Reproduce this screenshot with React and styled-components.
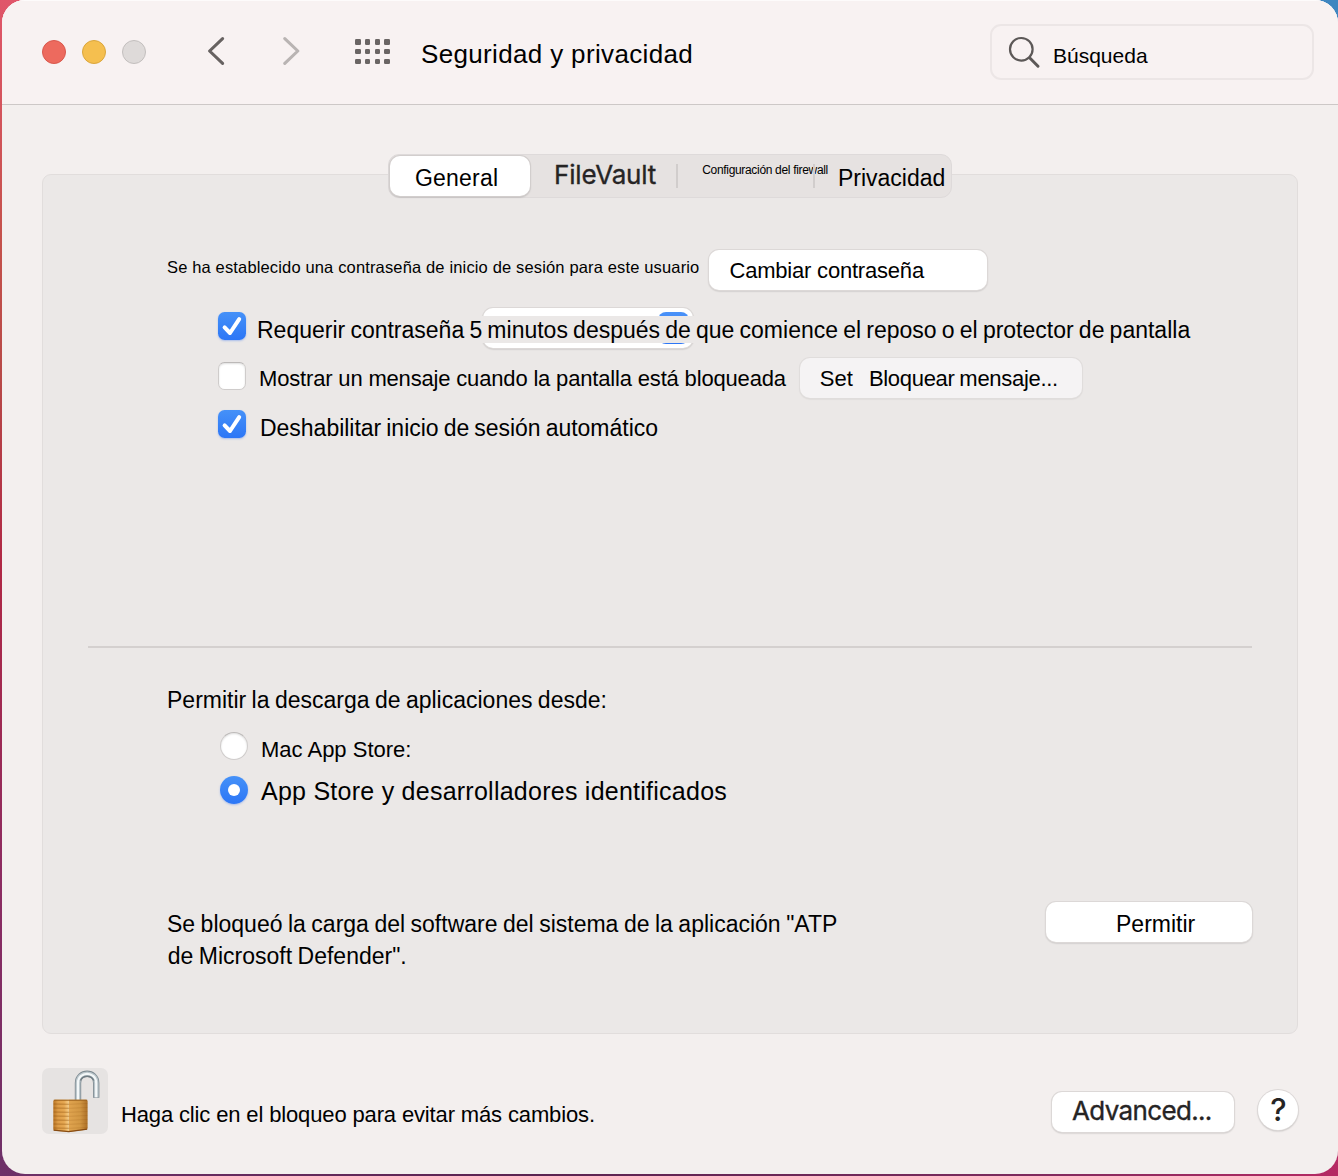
import React from "react";
import styled, { createGlobalStyle, css } from "styled-components";

const Global = createGlobalStyle`
  *, *::before, *::after { box-sizing: border-box; }
  body {
    margin: 0;
    overflow: hidden;
    font-family: "Liberation Sans", Arial, sans-serif;
    color: #000;
  }
`;

const Desktop = styled.div`
  width: 1338px;
  height: 1176px;
  padding: 0 0 2px 2px;
  background:
    radial-gradient(circle at 100% 0, #3f86c0 0 30px, transparent 31px),
    linear-gradient(90deg, #6e3068 0%, #5a2350 40%, #7a2a5c 75%, #b52a63 100%) 0 100% / 100% 24px no-repeat,
    linear-gradient(180deg, #e0566a 0%, #c5524c 20%, #b84a48 32%, #b02845 48%, #8c2c62 75%, #6e3068 100%);
`;

const Window = styled.main`
  display: flex;
  flex-direction: column;
  height: 1174px;
  border-radius: 23px;
  overflow: hidden;
  background: #f3efee;
  box-shadow: inset 0 1px 0 #fdfbfb;
`;

const Text = styled.span`
  flex: none;
  white-space: nowrap;
  line-height: ${(p) => p.$line || 26}px;
  font-size: ${(p) => p.$size || 22}px;
  letter-spacing: ${(p) => p.$track || 0}px;
  word-spacing: ${(p) => p.$word || 0}px;
  margin: ${(p) => p.$top || 0}px 0 0 ${(p) => p.$left || 0}px;
  ${(p) =>
    p.$ui &&
    css`
      font-family: Inter, Roboto, sans-serif;
      color: #262424;
      -webkit-text-stroke: 0.35px #262424;
    `}
`;

const Toolbar = styled.header`
  display: flex;
  align-items: flex-start;
  flex: none;
  height: 105px;
  padding: 0 24px 0 40px;
  background: #f8f2f2;
  border-bottom: 1px solid #cdc8c7;
  box-shadow: inset 0 1px 0 #fdfbfb;
`;

const Lights = styled.div`
  display: flex;
  gap: 16px;
  margin-top: 40px;
`;

const Light = styled.span`
  width: 24px;
  height: 24px;
  border-radius: 50%;
  background: ${(p) => p.$fill};
  border: 1px solid ${(p) => p.$edge};
`;

const Chevron = styled.svg`
  flex: none;
  width: 18px;
  height: 30px;
  margin: 36px 0 0 ${(p) => p.$left}px;
  fill: none;
  stroke: ${(p) => p.$color};
  stroke-width: 3.1;
  stroke-linecap: round;
  stroke-linejoin: round;
`;

const DotGrid = styled.div`
  display: grid;
  grid-template-columns: repeat(4, 5.6px);
  grid-auto-rows: 5.6px;
  gap: 4.2px;
  margin: 39px 0 0 54px;
`;

const Dot = styled.i`
  border-radius: 1.3px;
  background: #6a6564;
`;

const Search = styled.div`
  display: flex;
  align-items: flex-start;
  width: 324px;
  height: 56px;
  margin: 24px 0 0 auto;
  border: 2px solid #ece6e6;
  border-radius: 11px;
`;

const Magnifier = styled.svg`
  width: 34px;
  height: 34px;
  margin: 10px 0 0 15px;
  fill: none;
  stroke: #5c5857;
  stroke-linecap: round;
`;

const Body = styled.section`
  display: flex;
  flex-direction: column;
  flex: 1;
  padding: 49px 40px 0;
`;

const Tabs = styled.nav`
  z-index: 1;
  display: flex;
  align-items: flex-start;
  align-self: center;
  width: 564px;
  height: 44px;
  margin: 0 0 -24px 0;
  border: 1px solid #dedada;
  border-radius: 11px;
  background: #e6e2e1;
`;

const ActiveTab = styled.div`
  flex: none;
  width: 140px;
  height: 40px;
  margin: 1px 0 0 1px;
  border-radius: 10px;
  background: #fff;
  box-shadow: 0 0 0 1px #d2cecd, 0 1px 2px rgba(0, 0, 0, 0.35);
`;

const TabRule = styled.i`
  flex: none;
  width: 2px;
  height: 24px;
  margin: 9px 0 0 ${(p) => p.$left}px;
  background: #d1cdcc;
`;

const Panel = styled.section`
  display: flex;
  flex-direction: column;
  flex: none;
  height: 860px;
  padding: 74px 44px 0 45px;
  border: 1px solid #e1dddc;
  border-radius: 9px;
  background: #ebe8e7;
`;

const Row = styled.div`
  position: relative;
  display: flex;
  align-items: flex-start;
  flex: none;
  height: ${(p) => p.$height}px;
  padding-left: ${(p) => p.$indent || 0}px;
`;

const Button = styled.button`
  display: flex;
  align-items: flex-start;
  flex: none;
  width: ${(p) => p.$width}px;
  height: 40px;
  margin: ${(p) => (p.$top === undefined ? 1 : p.$top)}px 0 0 ${(p) => p.$left || 0}px;
  padding: 0;
  border: 0;
  border-radius: 10px;
  font: inherit;
  color: inherit;
  text-align: left;
  background: ${(p) => (p.$muted ? "#f5f3f4" : "#fff")};
  box-shadow: 0 0 0 1px ${(p) => (p.$muted ? "#e0dddc" : "#dcd8d7")},
    0 1px 2px rgba(0, 0, 0, ${(p) => (p.$muted ? 0.14 : 0.32)});
`;

const Box = styled.span`
  display: flex;
  flex: none;
  width: 28px;
  height: 28px;
  margin-top: 5px;
  border-radius: ${(p) => (p.$round ? "50%" : "6.5px")};
  align-items: center;
  justify-content: center;
  ${(p) =>
    p.$on
      ? css`
          background: linear-gradient(#4591f8, #2c76f6);
          box-shadow: 0 1px 2px rgba(50, 110, 240, 0.35);
        `
      : css`
          background: #fff;
          border: 1px solid #cfcccb;
          border-top-color: #bcb9b8;
          box-shadow: inset 0 1px 2px rgba(0, 0, 0, 0.13);
        `}
`;

const Tick = styled.svg`
  width: 28px;
  height: 28px;
  fill: none;
  stroke: #fff;
  stroke-width: 4;
  stroke-linecap: round;
  stroke-linejoin: round;
`;

const RadioDot = styled.i`
  width: 12px;
  height: 12px;
  border-radius: 50%;
  background: #fff;
`;

const Popup = styled.span`
  position: absolute;
  left: 394.5px;
  top: 1px;
  width: 210px;
  height: 40px;
  border-radius: 10px;
  background: #fff;
  box-shadow: 0 0 0 1px #dcd8d7, 0 1px 2px rgba(0, 0, 0, 0.32);

  &::before {
    content: "";
    position: absolute;
    right: 4px;
    top: 4px;
    width: 31px;
    height: 32px;
    border-radius: 8px;
    background: linear-gradient(#4a92f8, #2c76f6);
  }

  &::after {
    content: "";
    position: absolute;
    inset: 8px -3px 5px -3px;
    background: #ebe8e7;
  }
`;

const Over = styled(Text)`
  position: relative;
`;

const Divider = styled.hr`
  flex: none;
  width: 1164px;
  height: 2px;
  margin: 199px 0 38px;
  border: 0;
  background: #d4d0cf;
`;

const Notice = styled.div`
  display: flex;
  flex-direction: column;
  width: 878px;
  gap: 6px;
  padding-left: 79px;
`;

const Footer = styled.footer`
  display: flex;
  align-items: flex-start;
  margin-top: 34px;
`;

const LockWell = styled.div`
  width: 66px;
  height: 66px;
  border-radius: 7px;
  background: #e6e3e2;
`;

const Actions = styled.div`
  display: flex;
  align-items: flex-start;
  gap: 24px;
  margin: 22px 0 0 auto;
`;

const Help = styled.button`
  width: 40px;
  height: 40px;
  padding: 0 0 0 1px;
  border: 0;
  border-radius: 50%;
  background: #fff;
  color: #262424;
  font: 500 31px/40px Inter, Roboto, sans-serif;
  text-align: center;
  box-shadow: 0 0 0 1px #dcd8d7, 0 1px 2px rgba(0, 0, 0, 0.32);
`;

function Check({ on }) {
  return (
    <Box $on={on}>
      {on && (
        <Tick viewBox="0 0 28 28">
          <path d="M6.6 15.4 L12 21 L21.2 7.2" />
        </Tick>
      )}
    </Box>
  );
}

function Padlock() {
  const grooves = [36, 40, 44, 48, 52, 56, 60];
  const shackle = "M36 33 V15 C36 2.7 54.2 2.7 54.2 15";
  return (
    <svg width="66" height="66" viewBox="0 0 66 66" fill="none">
      <defs>
        <linearGradient id="left" x1="0" x2="1">
          <stop offset="0" stopColor="#b87424" />
          <stop offset="0.3" stopColor="#dd9c47" />
          <stop offset="0.7" stopColor="#e6a852" />
          <stop offset="1" stopColor="#f6cd86" />
        </linearGradient>
        <linearGradient id="right" x1="0" x2="1">
          <stop offset="0" stopColor="#e0a44f" />
          <stop offset="0.6" stopColor="#d29743" />
          <stop offset="1" stopColor="#ab6e26" />
        </linearGradient>
      </defs>
      <path d={`${shackle} V29.8`} stroke="#7c8990" strokeWidth="6.4" />
      <path d={`${shackle} V29.2`} stroke="#b9c4c9" strokeWidth="4.8" />
      <path d={`${shackle} V29.2`} stroke="#f3f7f8" strokeWidth="2.2" />
      <path d="M38.4 12.5 C40.6 6.8 49.6 6.8 51.8 12.5" stroke="#6f7c83" strokeWidth="1.3" />
      <path d="M11.3 33.5 Q11.3 31.8 13 31.8 H26.8 V64 L13 62.8 Q11.3 62.4 11.3 61 Z" fill="url(#left)" />
      <path d="M26.8 31.8 H44 Q45.6 31.8 45.6 33.5 V60 Q45.6 61.4 44 61.7 L26.8 64 Z" fill="url(#right)" />
      {grooves.map((g) => (
        <g key={g} stroke="#8f520e">
          <path d={`M11.6 ${g} L26.8 ${g + 0.3}`} strokeOpacity="0.5" strokeWidth="1.1" />
          <path d={`M26.8 ${g + 0.3} L45.4 ${g - 0.5}`} strokeOpacity="0.22" strokeWidth="0.9" />
        </g>
      ))}
      <path d="M11.8 32.2 H45.2" stroke="#9a601c" strokeWidth="1" />
      <path d="M11.6 62.2 L26.8 63.7 L45.2 61.2" stroke="#874c14" strokeWidth="1.2" />
    </svg>
  );
}

export default function App() {
  return (
    <Desktop>
      <Global />
      <Window>
        <Toolbar>
          <Lights>
            <Light $fill="#ed6a5e" $edge="#d9584d" />
            <Light $fill="#f5bf4f" $edge="#dba63c" />
            <Light $fill="#dedad9" $edge="#c3bfbe" />
          </Lights>
          <Chevron $left={61} $color="#676261" viewBox="0 0 18 30">
            <path d="M15.6 2.6 L2.6 15 L15.6 27.4" />
          </Chevron>
          <Chevron $left={58} $color="#b9b4b3" viewBox="0 0 18 30">
            <path d="M1.8 2.6 L14.8 15 L1.8 27.4" />
          </Chevron>
          <DotGrid>
            {Array.from({ length: 12 }, (_, i) => (
              <Dot key={i} />
            ))}
          </DotGrid>
          <Text $size={26} $line={30} $track={0.35} $top={39} $left={31}>
            Seguridad y privacidad
          </Text>
          <Search>
            <Magnifier viewBox="0 0 34 34">
              <circle cx="14.3" cy="13.3" r="11.3" strokeWidth="2.2" />
              <path d="M22.6 21.8 L31 30.2" strokeWidth="3" />
            </Magnifier>
            <Text $size={21} $top={17} $left={12}>
              Búsqueda
            </Text>
          </Search>
        </Toolbar>

        <Body>
          <Tabs>
            <ActiveTab>
              <Text as="div" $size={23} $track={0.2} $top={9} $left={25}>
                General
              </Text>
            </ActiveTab>
            <Text $ui $size={26} $track={-0.15} $top={7} $left={24}>
              FileVault
            </Text>
            <TabRule $left={20} />
            <Text $size={12} $line={16} $track={-0.32} $top={7} $left={24}>
              Configuración del firewall
            </Text>
            <TabRule $left={-15} />
            <Text $size={23} $top={10} $left={23}>
              Privacidad
            </Text>
          </Tabs>

          <Panel>
            <Row $height={58} $indent={79}>
              <Text $size={16.5} $track={0.15} $top={5}>
                Se ha establecido una contraseña de inicio de sesión para este usuario
              </Text>
              <Button $width={278} $left={10}>
                <Text $track={-0.2} $top={8} $left={20}>
                  Cambiar contraseña
                </Text>
              </Button>
            </Row>

            <Row $height={50} $indent={130}>
              <Popup />
              <Check on />
              <Over $size={23} $word={-1.2} $top={10} $left={11}>
                Requerir contraseña 5 minutos después de que comience el reposo o el protector de pantalla
              </Over>
            </Row>
            <Row $height={48} $indent={130}>
              <Check />
              <Text $track={-0.17} $top={9} $left={13}>
                Mostrar un mensaje cuando la pantalla está bloqueada
              </Text>
              <Button $muted $width={282} $left={14}>
                <Text $top={8} $left={20}>Set</Text>
                <Text $track={-0.3} $word={-1} $top={8} $left={16}>
                  Bloquear mensaje...
                </Text>
              </Button>
            </Row>
            <Row $height={42} $indent={130}>
              <Check on />
              <Text $size={23} $track={-0.02} $word={-1.3} $top={10} $left={14}>
                Deshabilitar inicio de sesión automático
              </Text>
            </Row>

            <Divider />

            <Row $height={41} $indent={79}>
              <Text $size={23} $word={-1} $top={1}>
                Permitir la descarga de aplicaciones desde:
              </Text>
            </Row>
            <Row $height={44} $indent={132}>
              <Box $round />
              <Text $top={10} $left={13}>Mac App Store:</Text>
            </Row>
            <Row $height={131} $indent={132}>
              <Box $round $on>
                <RadioDot />
              </Box>
              <Text $size={25} $track={0.25} $top={7} $left={13}>
                App Store y desarrolladores identificados
              </Text>
            </Row>

            <Row $height={70}>
              <Notice>
                <Text $size={23} $word={-0.9} $top={9}>
                  Se bloqueó la carga del software del sistema de la aplicación "ATP
                </Text>
                <Text $size={23} $word={-0.9} $left={0.7}>de Microsoft Defender".</Text>
              </Notice>
              <Button $width={206} $left={80} $top={0}>
                <Text $size={23} $top={9} $left={70}>Permitir</Text>
              </Button>
            </Row>
          </Panel>

          <Footer>
            <LockWell>
              <Padlock />
            </LockWell>
            <Text $track={-0.14} $top={34} $left={13}>
              Haga clic en el bloqueo para evitar más cambios.
            </Text>
            <Actions>
              <Button $width={182} $top={2}>
                <Text $ui $size={26} $track={-0.65} $top={6} $left={20}>
                  Advanced...
                </Text>
              </Button>
              <Help>?</Help>
            </Actions>
          </Footer>
        </Body>
      </Window>
    </Desktop>
  );
}
